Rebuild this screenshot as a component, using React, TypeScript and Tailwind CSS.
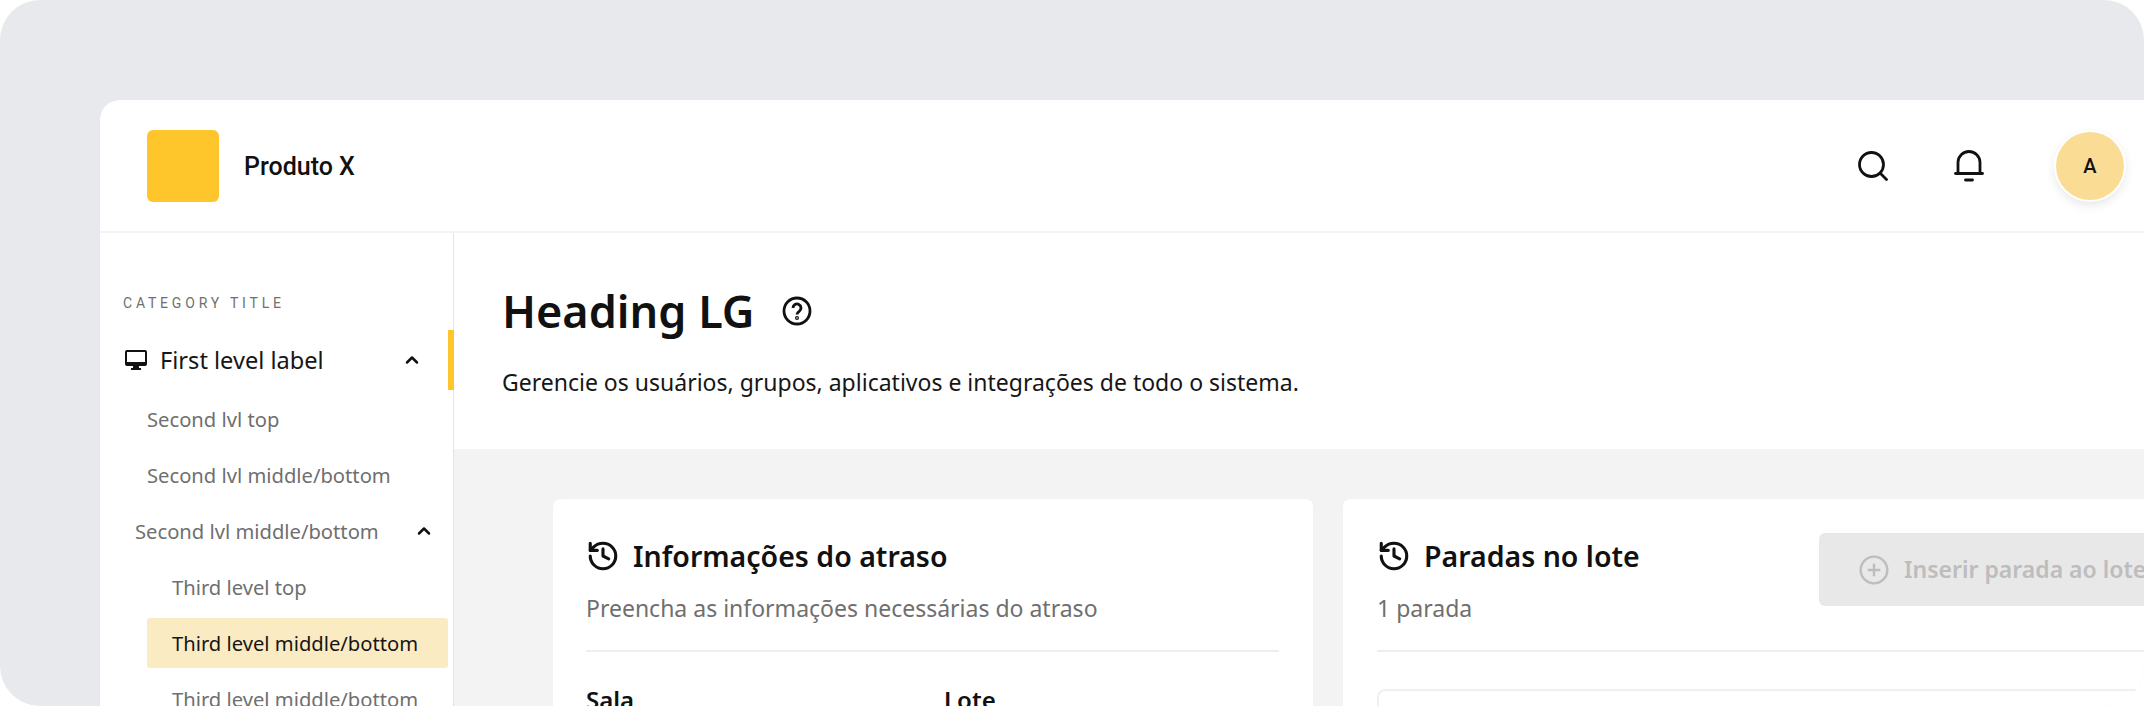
import { ChevronUp, CirclePlus, History } from "lucide-react";

const plex = "font-['Noto_Sans','Roboto',sans-serif]";

function Monitor() {
  return (
    <svg width="22" height="20" viewBox="0 0 22 20" className="shrink-0">
      <path
        fill="#111"
        fillRule="evenodd"
        d="M2 0h18a2 2 0 0 1 2 2v12a2 2 0 0 1-2 2h-6v2h2v2H6v-2h2v-2H2a2 2 0 0 1-2-2V2a2 2 0 0 1 2-2Zm0 2v10h18V2H2Z"
      />
    </svg>
  );
}

function Search() {
  return (
    <svg width="30" height="30" viewBox="0 0 30 30" fill="none" stroke="#111" strokeWidth="2.8">
      <circle cx="13.5" cy="13.5" r="12" />
      <path d="m22.5 22.5 6 6" strokeLinecap="round" />
    </svg>
  );
}

function Bell() {
  return (
    <svg width="30" height="32" viewBox="0 0 30 32" fill="none" stroke="#111" strokeWidth="2.8" strokeLinecap="round">
      <path d="M4 23V12.500a11 11 0 0 1 22 0V23" />
      <path d="M1.500 23.500h27" />
      <path d="M11.500 30h7" />
    </svg>
  );
}

function Help() {
  return (
    <svg width="30" height="30" viewBox="0 0 30 30" fill="none" stroke="#111" strokeWidth="2.8">
      <circle cx="15" cy="15" r="13" />
      <path d="M11 12a4 4 0 1 1 6.200 3.300c-1.400.9-2.200 1.600-2.200 3.200" />
      <circle cx="15" cy="22" r="0.600" />
    </svg>
  );
}

function NavRow({ label, indent, active }: { label: string; indent: string; active?: boolean }) {
  return (
    <div
      className={`ml-[47px] mr-[5px] flex h-[50px] items-center rounded-[3px] ${indent} text-[20.200px] ${
        active ? "bg-[#fbebc3] text-[#161616]" : "text-[#6f6f6f]"
      }`}
    >
      {label}
    </div>
  );
}

function CardHeader({ title, sub }: { title: string; sub: string }) {
  return (
    <div>
      <div className="flex items-center gap-[13px]">
        <History size={34} strokeWidth={2.2} color="#111" />
        <span className="text-[28.5px] leading-[36px] font-semibold text-[#111]">{title}</span>
      </div>
      <p className="mt-[19px] text-[23px] leading-[30px] text-[#6f6f6f]">{sub}</p>
    </div>
  );
}

export default function App() {
  return (
    <div className={`h-[706px] w-[2144px] overflow-hidden bg-white ${plex}`}>
      <div className="h-[706px] w-[2144px] overflow-hidden rounded-[40px] bg-[#e8e9ec] pt-[100px] pl-[100px]">
        <div className="h-[606px] overflow-hidden rounded-tl-[20px] bg-white">
          <header className="flex h-[133px] items-center border-b-2 border-[#f3f3f4] pr-[20px] pl-[47px]">
            <div className="h-[72px] w-[72px] rounded-[6px] bg-[#ffc62b]" />
            <span className="ml-[25px] pt-[2px] font-['Roboto',sans-serif] text-[25px] font-medium text-[#111]">
              Produto X
            </span>
            <div className="ml-auto flex items-center">
              <Search />
              <div className="ml-[66px]">
                <Bell />
              </div>
              <div className="ml-[72px] flex h-[68px] w-[68px] items-center justify-center rounded-full bg-[#fbdc94] font-['Roboto',sans-serif] text-[20px] font-medium text-[#111] shadow-[0_0_0_2px_#fff,0_4px_12px_rgba(0,0,0,0.12)]">
                A
              </div>
            </div>
          </header>

          <div className="flex h-[473px]">
            <aside className="w-[354px] shrink-0 border-r border-[#e4e4e6] pt-[61px]">
              <div className="pl-[23px] font-['Roboto',sans-serif] text-[14px] leading-[18px] tracking-[3.8px] text-[#6f6f6f]">
                CATEGORY TITLE
              </div>
              <div className="relative mt-[18px] flex h-[60px] items-center pr-[31px] pl-[25px] text-[23.600px] text-[#161616]">
                <Monitor />
                <span className="ml-[13px] pt-[2px]">First level label</span>
                <ChevronUp size={20} strokeWidth={3} color="#111" className="ml-auto" />
                <div className="absolute top-0 right-[-1px] h-[60px] w-[6px] bg-[#ffc62b]" />
              </div>
              <div className="mt-[4px] flex flex-col gap-[6px]">
                <NavRow label="Second lvl top" indent="" />
                <NavRow label="Second lvl middle/bottom" indent="" />
                <div className="ml-[35px] mr-[19px] flex h-[50px] items-center text-[20.200px] text-[#6f6f6f]">
                  Second lvl middle/bottom
                  <ChevronUp size={20} strokeWidth={3} color="#111" className="ml-auto" />
                </div>
                <NavRow label="Third level top" indent="pl-[25px]" />
                <NavRow label="Third level middle/bottom" indent="pl-[25px]" active />
                <NavRow label="Third level middle/bottom" indent="pl-[25px]" />
              </div>
            </aside>

            <main className="min-w-0 flex-1 bg-[#f3f3f3]">
              <div className="h-[216px] bg-white pt-[48px] pl-[48px]">
                <div className="flex items-center gap-[27px]">
                  <h1 className="text-[45px] leading-[60px] font-semibold text-[#111]">Heading LG</h1>
                  <Help />
                </div>
                <p className="mt-[26px] text-[23px] leading-[30px] text-[#161616]">
                  Gerencie os usuários, grupos, aplicativos e integrações de todo o sistema.
                </p>
              </div>

              <div className="flex gap-[30px] pt-[50px] pl-[99px]">
                <section className="h-[300px] w-[760px] shrink-0 rounded-[8px] bg-white px-[33px] pt-[39px]">
                  <CardHeader title="Informações do atraso" sub="Preencha as informações necessárias do atraso" />
                  <div className="mt-[27px] h-[2px] w-[693px] bg-[#eeeeee]" />
                  <div className="mt-[30px] flex text-[24px] font-semibold text-[#111]">
                    <span className="w-[358px]">Sala</span>
                    <span>Lote</span>
                  </div>
                </section>

                <section className="h-[300px] w-[900px] shrink-0 rounded-[8px] bg-white px-[34px] pt-[39px]">
                  <div className="flex items-start">
                    <div className="w-[442px] shrink-0">
                      <CardHeader title="Paradas no lote" sub="1 parada" />
                    </div>
                    <div className="mt-[-5px] flex h-[73px] w-[400px] shrink-0 items-center gap-[14px] rounded-[6px] bg-[#e8e8e8] pl-[39px] text-[23px] font-semibold whitespace-nowrap text-[#bdbdbd]">
                      <CirclePlus size={32} strokeWidth={1.8} color="#bdbdbd" />
                      Inserir parada ao lote
                    </div>
                  </div>
                  <div className="mt-[27px] h-[2px] bg-[#eeeeee]" />
                  <div className="mt-[37px] h-[60px] rounded-[8px] border-2 border-[#f0f0f0]" />
                </section>
              </div>
            </main>
          </div>
        </div>
      </div>
    </div>
  );
}
